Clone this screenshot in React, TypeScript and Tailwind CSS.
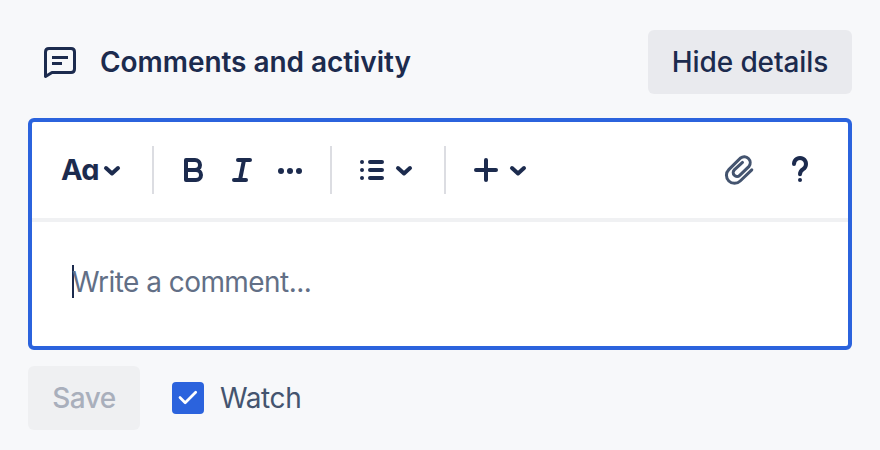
import React from "react";

function Chevron() {
  return (
    <svg className="h-6 w-6 shrink-0" viewBox="0 0 24 24" fill="none" stroke="currentColor" strokeWidth="4" strokeLinecap="round" strokeLinejoin="round">
      <path d="M6 10l6 5.5 6-5.5" />
    </svg>
  );
}

function Separator() {
  return <div className="h-12 w-0.5 shrink-0 bg-[#dcdde2]" />;
}

export default function App() {
  return (
    <div className="flex h-[450px] w-[880px] flex-col bg-[#f7f8fa] px-7 pt-[30px] font-['Inter',sans-serif] text-[28px] leading-8 text-[#1c2b4e]">
      <header className="flex h-16 items-center">
        <svg className="ml-3 h-10 w-10" viewBox="40 42 40 40" fill="none" stroke="currentColor" strokeWidth="3" strokeLinejoin="round">
          <path d="M45.5 76.5V52q0-3.5 3.5-3.5h22q3.5 0 3.5 3.5v17q0 3.5-3.5 3.5H52z" />
          <path d="M52 57.5h16M52 63.5h10" />
        </svg>
        <h1 className="ml-5 font-semibold tracking-[-0.05px]">Comments and activity</h1>
        <button className="ml-auto h-16 w-[204px] rounded-md bg-[#e9eaee] font-medium tracking-[-0.1px]">Hide details</button>
      </header>

      <section className="mt-6 h-[232px] rounded-md border-4 border-[#2b63dd] bg-white">
        <div className="flex h-[100px] items-center border-b-4 border-[#f0f1f3]">
          <button className="flex w-[120px] items-center pl-[29px]">
            <span className="w-[39px] text-left text-[29px] font-bold tracking-[-0.7px] [font-feature-settings:'cv11']">Aa</span>
            <Chevron />
          </button>
          <Separator />
          <div className="flex w-[176px] items-center pl-6">
            <svg className="h-8 w-8" viewBox="0 0 32 32" fill="none" stroke="currentColor" strokeWidth="4" strokeLinejoin="round">
              <path d="M8 6h9a5 5 0 0 1 0 10H8zM8 16h10a5 5 0 0 1 0 10H8z" />
            </svg>
            <svg className="ml-4 h-8 w-8" viewBox="0 0 32 32" fill="none" stroke="currentColor" strokeWidth="4" strokeLinecap="round">
              <path d="M12 6h12M8 26h12M18 6l-4 20" />
            </svg>
            <svg className="ml-4 h-8 w-8" viewBox="0 0 32 32" fill="currentColor">
              <circle cx="7" cy="17" r="3" />
              <circle cx="16" cy="17" r="3" />
              <circle cx="25" cy="17" r="3" />
            </svg>
          </div>
          <Separator />
          <button className="flex w-28 items-center pl-6">
            <svg className="h-8 w-8" viewBox="0 0 32 32" fill="none" stroke="currentColor" strokeWidth="4" strokeLinecap="round">
              <path d="M14 8h12M14 16h12M14 24h12M6 8h.01M6 16h.01M6 24h.01" />
            </svg>
            <span className="ml-1"><Chevron /></span>
          </button>
          <Separator />
          <button className="flex items-center pl-6">
            <svg className="h-8 w-8" viewBox="0 0 32 32" fill="none" stroke="currentColor" strokeWidth="4" strokeLinecap="round">
              <path d="M6 16h20M16 6v20" />
            </svg>
            <span className="ml-1"><Chevron /></span>
          </button>
          <div className="ml-auto flex items-center gap-7 pr-8">
            <svg className="h-8 w-8 text-[#44546f]" viewBox="724 154 32 32" fill="none" stroke="currentColor" strokeWidth="3" strokeLinecap="round">
              <path d="M751.8 169.8L740.2 181A8 8 0 0 1 728.8 169.6L740.6 158A6 6 0 0 1 749 166.4L739.7 175.3A3.8 3.8 0 0 1 734.3 169.9L742.5 162.4" />
            </svg>
            <svg className="h-8 w-8" viewBox="784 154 32 32" fill="none" stroke="currentColor" strokeWidth="4" strokeLinecap="round">
              <path d="M794 164a6 6 0 1 1 9 5.2q-3 1.8-3 5M800 180h.01" />
            </svg>
          </div>
        </div>
        <div className="flex h-[120px] items-center pl-10">
          <span className="mb-px h-[33px] w-0.5 bg-[#1c2b4e]" />
          <span className="-ml-0.5 tracking-[-0.55px] text-[#626f86]">Write a comment...</span>
        </div>
      </section>

      <footer className="mt-4 flex h-16 items-center">
        <button className="h-16 w-28 rounded-md bg-[#eff0f2] font-medium tracking-[-0.5px] text-[#a9afbc]">Save</button>
        <label className="ml-8 flex items-center gap-4 text-[#44546f]">
          <span className="h-8 w-8 rounded bg-[#2b63dd] text-white">
            <svg className="h-8 w-8" viewBox="0 0 32 32" fill="none" stroke="currentColor" strokeWidth="2.7" strokeLinecap="round" strokeLinejoin="round">
              <path d="M8 15.5l5.2 5.2L23.7 10.2" />
            </svg>
          </span>
          <span className="tracking-[-0.4px]">Watch</span>
        </label>
      </footer>
    </div>
  );
}
